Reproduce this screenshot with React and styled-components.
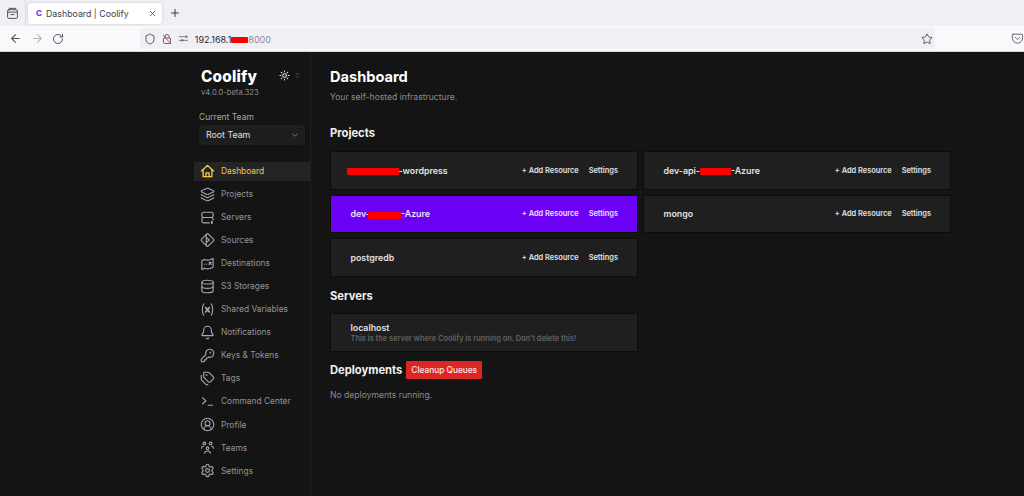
import React from 'react';
import styled, { createGlobalStyle } from 'styled-components';
import {
  Layers, Database, Bell, KeyRound, Tags, CircleUserRound, Settings as Gear,
  ArrowLeft, ArrowRight, RotateCw, Shield, Star, X, Plus, ChevronDown, ChevronsUpDown, Sun,
} from 'lucide-react';

const Global = createGlobalStyle`
  html, body { margin: 0; padding: 0; background: #141414; }
  body { font-family: Inter, "Liberation Sans", sans-serif; width: 1024px; height: 496px; overflow: hidden; }
`;

const Window = styled.div`
  display: flex;
  flex-direction: column;
  width: 1024px;
  height: 496px;
`;

const TabStrip = styled.div`
  display: flex;
  align-items: center;
  height: 26px;
  background: #f0f0f4;
  color: #3a3a42;
`;

const TabViews = styled.div`
  display: flex;
  align-items: center;
  justify-content: center;
  width: 25px;
  height: 26px;
  border-right: 1px solid #dcdce0;
`;

const Tab = styled.div`
  display: flex;
  align-items: center;
  width: 134px;
  height: 21px;
  margin-left: 2px;
  padding: 0 5px 0 8px;
  box-sizing: border-box;
  background: #fff;
  border-radius: 3px;
  box-shadow: 0 0 3px rgba(0, 0, 0, .18);
  font-size: 8.8px;
  color: #3d3d45;
`;

const Favicon = styled.span`
  width: 10px;
  font-size: 8px;
  font-weight: 800;
  color: #7c3aed;
`;

const TabTitle = styled.span`
  flex: 1;
`;

const NewTab = styled.div`
  display: flex;
  margin-left: 7px;
`;

const Toolbar = styled.div`
  display: flex;
  align-items: center;
  height: 25px;
  background: #f9f9fb;
  color: #55555c;
  border-bottom: 1px solid #d8d8dc;
`;

const NavButtons = styled.div`
  display: flex;
  align-items: center;
  gap: 8.5px;
  width: 140px;
  padding-left: 9px;
  box-sizing: border-box;
`;

const UrlBar = styled.div`
  display: flex;
  align-items: center;
  width: 797px;
  height: 21px;
  padding: 0 2px 0 4px;
  box-sizing: border-box;
  background: #f0f0f4;
  border-radius: 3px;
  font-size: 9px;
`;

const UrlIcons = styled.div`
  display: flex;
  align-items: center;
  gap: 5px;
  margin-right: 6px;
`;

const UrlText = styled.span`
  flex: 1;
  padding-top: 1px;
  color: #2b2a33;
`;

const UrlPort = styled.span`
  color: #8a8a92;
`;

const PocketWrap = styled.div`
  display: flex;
  margin-left: 76px;
`;

const Redact = styled.span`
  display: inline-block;
  width: ${(p) => p.$w}px;
  height: ${(p) => p.$h || 7}px;
  margin-left: ${(p) => p.$ml || 0}px;
  background: #f00;
  border-radius: 1px;
  vertical-align: middle;
`;

const Body = styled.div`
  flex: 1;
  display: flex;
  min-height: 0;
  padding-left: 194px;
  background: #141414;
`;

const Sidebar = styled.aside`
  width: 116px;
  flex-shrink: 0;
  border-right: 1px solid #1f1f1f;
  display: flex;
  flex-direction: column;
`;

const BrandRow = styled.div`
  display: flex;
  align-items: flex-start;
  justify-content: space-between;
  padding: 16px 9px 0 7px;
`;

const Brand = styled.div`
  font-size: 15.3px;
  font-weight: 800;
  line-height: 18px;
  color: #fff;
  letter-spacing: .2px;
`;

const Version = styled.div`
  margin-top: 2px;
  font-size: 7.6px;
  line-height: 10px;
  color: #8c8c8c;
`;

const ThemeIcons = styled.div`
  display: flex;
  align-items: center;
  gap: 4.5px;
  margin-top: 2px;
  color: #e8e8e8;
`;

const TeamLabel = styled.div`
  margin: 13px 0 0 5px;
  font-size: 8.5px;
  line-height: 12px;
  color: #a6a6a6;
`;

const TeamSelect = styled.div`
  display: flex;
  align-items: center;
  justify-content: space-between;
  height: 19.5px;
  margin: 2px 5px 0 5px;
  padding: 0 5px 0 7px;
  background: #1e1e1e;
  border-radius: 2px;
  font-size: 8.8px;
  color: #e0e0e0;
`;

const NavList = styled.nav`
  display: flex;
  flex-direction: column;
  gap: 4.05px;
  margin-top: 17px;
`;

const NavIcon = styled.span`
  display: flex;
  align-items: center;
  justify-content: center;
  width: 15px;
  color: ${(p) => (p.$active ? '#f4cc4e' : '#a8a8a8')};
`;

const NavItem = styled.div`
  display: flex;
  align-items: center;
  gap: 6px;
  height: 19px;
  padding-left: 6px;
  font-size: 8.4px;
  color: ${(p) => (p.$active ? '#f0c94a' : '#949494')};
  background: ${(p) => (p.$active ? '#242424' : 'transparent')};
`;

const Main = styled.main`
  flex: 1;
  padding: 16px 0 0 19px;
  display: flex;
  flex-direction: column;
`;

const Title = styled.h1`
  margin: 0;
  font-size: 14.6px;
  line-height: 18px;
  font-weight: 700;
  color: #fff;
`;

const Subtitle = styled.div`
  margin-top: 5px;
  font-size: 8.6px;
  line-height: 12px;
  color: #8c8c8c;
`;

const SectionTitle = styled.h2`
  margin: ${(p) => p.$top || 0}px 0 0;
  font-size: 11.2px;
  line-height: 14px;
  font-weight: 700;
  color: #f0f0f0;
`;

const ProjectGrid = styled.div`
  display: grid;
  grid-template-columns: 308px 308px;
  grid-auto-rows: 38.5px;
  gap: 5.2px 5px;
  margin-top: 11px;
`;

const Card = styled.div`
  display: flex;
  align-items: center;
  justify-content: space-between;
  padding: 0 19px 0 19.5px;
  box-sizing: border-box;
  background: ${(p) => (p.$purple ? '#6b00f5' : '#1f1f1f')};
  border: 1px solid #0c0c0c;
  color: ${(p) => (p.$purple ? '#ece0ff' : '#e2e2e2')};
`;

const CardName = styled.div`
  font-size: 8.8px;
  font-weight: 600;
`;

const CardLinks = styled.div`
  display: flex;
  gap: 10px;
  font-size: 7.4px;
  font-weight: 600;
`;

const ServerCard = styled(Card)`
  width: 308px;
  height: 38.5px;
  flex-direction: column;
  align-items: flex-start;
  justify-content: center;
  margin-top: 10.5px;
`;

const ServerNote = styled.div`
  margin-top: 1px;
  font-size: 7.4px;
  font-weight: 600;
  color: #626262;
`;

const DeployRow = styled.div`
  display: flex;
  align-items: center;
  gap: 4px;
  margin-top: 9.5px;
`;

const CleanupButton = styled.button`
  height: 17.5px;
  padding: 0 5px;
  border: 0;
  border-radius: 1px;
  background: #dc2626;
  color: #fde8e8;
  font: 500 8.3px Inter, sans-serif;
`;

const Muted = styled.div`
  margin-top: 10.5px;
  font-size: 8.6px;
  line-height: 12px;
  color: #8c8c8c;
`;

const Svg = ({ size = 15, children, stroke = 1.8 }) => (
  <svg width={size} height={size} viewBox="0 0 24 24" fill="none" stroke="currentColor" strokeWidth={stroke} strokeLinecap="round" strokeLinejoin="round">
    {children}
  </svg>
);

const HomeIcon = () => (
  <Svg size={16} stroke={2.1}>
    <path d="M2.500 12 12 3l9.500 9" />
    <path d="M5 9.500V21h14V9.500" />
    <path d="M9.500 21v-6h5v6" />
  </Svg>
);

const ServerIcon = () => (
  <Svg>
    <path d="M6 3.500h12a3 3 0 0 1 3 3V9a3 3 0 0 1-3 3H6a3 3 0 0 1-3-3V6.500a3 3 0 0 1 3-3z" />
    <path d="M15 20.500H6a3 3 0 0 1-3-3V15a3 3 0 0 1 3-3h12a3 3 0 0 1 3 3v1" />
    <path d="M19 18.500v2.500" strokeWidth="2.800" />
  </Svg>
);

const SourceIcon = () => (
  <Svg size={16}>
    <path d="M10.600 2.600a2 2 0 0 1 2.800 0l8 8a2 2 0 0 1 0 2.800l-8 8a2 2 0 0 1-2.800 0l-8-8a2 2 0 0 1 0-2.800z" />
    <path d="M10 3v18M10 8l5 4-5 4" />
  </Svg>
);

const DestinationIcon = () => (
  <Svg>
    <path d="M3 7.500 7 5.500c3 1.500 6 1.500 9 .5l5-2v14l-5 2c-3 1-6 1-9-.5l-4 2z" />
    <path d="M7 13h.01M10.500 13h.01M14.500 10l3.500 3.500M18 10l-3.500 3.500" />
  </Svg>
);

const VariableIcon = () => (
  <Svg>
    <path d="M6 3C3 7.500 3 16.500 6 21M18 3c3 4.500 3 13.500 0 18" />
    <path d="M9 9l6 7M15 9l-6 7" strokeWidth="2.600" />
  </Svg>
);

const TerminalIcon = () => (
  <Svg>
    <path d="M4 6l5.500 5L4 16M13 18h7" />
  </Svg>
);

const TeamsIcon = () => (
  <Svg>
    <circle cx="7" cy="5.500" r="2.100" />
    <circle cx="17" cy="5.500" r="2.100" />
    <circle cx="12" cy="13" r="2.100" />
    <path d="M2.500 13c0-1.800 1.200-3 3-3M21.500 13c0-1.800-1.200-3-3-3M7.500 21c0-2.300 1.800-3.500 4.500-3.500s4.500 1.200 4.500 3.500" />
  </Svg>
);

const TabViewsIcon = () => (
  <Svg size={13} stroke={1.6}>
    <path d="M5 5h14a2 2 0 0 1 2 2v12a2 2 0 0 1-2 2H5a2 2 0 0 1-2-2V7a2 2 0 0 1 2-2z" />
    <path d="M3 9.500h18M6 2.500h12M9 14h6" />
  </Svg>
);

const LockOffIcon = () => (
  <svg width="12" height="12" viewBox="0 0 24 24" fill="none" stroke="#55555c" strokeWidth="1.8">
    <rect x="5" y="10" width="14" height="11" rx="2" />
    <path d="M8 10V7a4 4 0 0 1 8 0v3" />
    <path d="M4 4l16 18" stroke="#e22850" />
  </svg>
);

const PermissionIcon = () => (
  <Svg size={11} stroke={1.6}>
    <path d="M3 8h12M3 16h4M11 16h10" />
    <circle cx="18" cy="8" r="2" />
    <circle cx="9" cy="16" r="2" />
  </Svg>
);

const PocketIcon = () => (
  <Svg size={13} stroke={1.6}>
    <path d="M4 4h16a1.500 1.500 0 0 1 1.500 1.500V11a9.500 9.500 0 0 1-19 0V5.500A1.500 1.500 0 0 1 4 4z" />
    <path d="M8 10l4 4 4-4" />
  </Svg>
);

const lucide = { size: 15, strokeWidth: 1.8 };

const NAV = [
  { label: 'Dashboard', icon: <HomeIcon />, active: true },
  { label: 'Projects', icon: <Layers {...lucide} /> },
  { label: 'Servers', icon: <ServerIcon /> },
  { label: 'Sources', icon: <SourceIcon /> },
  { label: 'Destinations', icon: <DestinationIcon /> },
  { label: 'S3 Storages', icon: <Database {...lucide} /> },
  { label: 'Shared Variables', icon: <VariableIcon /> },
  { label: 'Notifications', icon: <Bell {...lucide} /> },
  { label: 'Keys & Tokens', icon: <KeyRound {...lucide} /> },
  { label: 'Tags', icon: <Tags {...lucide} /> },
  { label: 'Command Center', icon: <TerminalIcon /> },
  { label: 'Profile', icon: <CircleUserRound {...lucide} /> },
  { label: 'Teams', icon: <TeamsIcon /> },
  { label: 'Settings', icon: <Gear {...lucide} /> },
];

const Project = ({ name, purple }) => (
  <Card $purple={purple}>
    <CardName>{name}</CardName>
    <CardLinks>
      <span>+ Add Resource</span>
      <span>Settings</span>
    </CardLinks>
  </Card>
);

export default function App() {
  return (
    <Window>
      <Global />
      <TabStrip>
        <TabViews><TabViewsIcon /></TabViews>
        <Tab>
          <Favicon>C</Favicon>
          <TabTitle>Dashboard | Coolify</TabTitle>
          <X size={9} />
        </Tab>
        <NewTab><Plus size={12} /></NewTab>
      </TabStrip>
      <Toolbar>
        <NavButtons>
          <ArrowLeft size={13} />
          <ArrowRight size={13} color="#b4b4b8" />
          <RotateCw size={12} />
        </NavButtons>
        <UrlBar>
          <UrlIcons>
            <Shield size={12} />
            <LockOffIcon />
            <PermissionIcon />
          </UrlIcons>
          <UrlText>192.168.1<Redact $w={17} $h={6} />
            <UrlPort>8000</UrlPort>
          </UrlText>
          <Star size={12} />
        </UrlBar>
        <PocketWrap><PocketIcon /></PocketWrap>
      </Toolbar>
      <Body>
        <Sidebar>
          <BrandRow>
            <div>
              <Brand>Coolify</Brand>
              <Version>v4.0.0-beta.323</Version>
            </div>
            <ThemeIcons>
              <Sun size={11} strokeWidth={2.2} />
              <ChevronsUpDown size={7} color="#777" />
            </ThemeIcons>
          </BrandRow>
          <TeamLabel>Current Team</TeamLabel>
          <TeamSelect>
            Root Team
            <ChevronDown size={10} color="#888" />
          </TeamSelect>
          <NavList>
            {NAV.map((item) => (
              <NavItem key={item.label} $active={item.active}>
                <NavIcon $active={item.active}>{item.icon}</NavIcon>
                {item.label}
              </NavItem>
            ))}
          </NavList>
        </Sidebar>
        <Main>
          <Title>Dashboard</Title>
          <Subtitle>Your self-hosted infrastructure.</Subtitle>
          <SectionTitle $top={23}>Projects</SectionTitle>
          <ProjectGrid>
            <Project name={<><Redact $w={52} $ml={-4} />-wordpress</>} />
            <Project name={<>dev-api-<Redact $w={31} />-Azure</>} />
            <Project purple name={<>dev-<Redact $w={33} $ml={-2} />-Azure</>} />
            <Project name="mongo" />
            <Project name="postgredb" />
          </ProjectGrid>
          <SectionTitle $top={12}>Servers</SectionTitle>
          <ServerCard>
            <CardName>localhost</CardName>
            <ServerNote>This is the server where Coolify is running on. Don't delete this!</ServerNote>
          </ServerCard>
          <DeployRow>
            <SectionTitle>Deployments</SectionTitle>
            <CleanupButton>Cleanup Queues</CleanupButton>
          </DeployRow>
          <Muted>No deployments running.</Muted>
        </Main>
      </Body>
    </Window>
  );
}
